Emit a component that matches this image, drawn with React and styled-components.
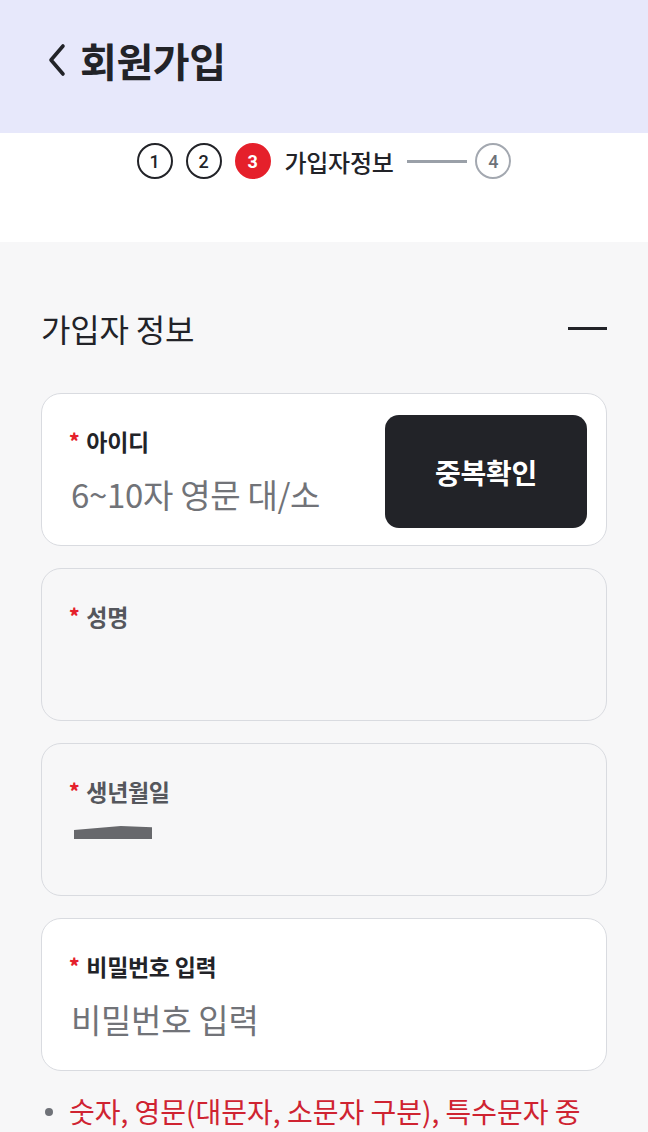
import React from 'react'
import styled, { createGlobalStyle } from 'styled-components'

const GlobalStyle = createGlobalStyle`
    * { box-sizing: border-box; }
    html, body {
        margin: 0;
        padding: 0;
        background: #f7f7f8;
        font-family: "Noto Sans CJK KR", "Noto Sans", Roboto, sans-serif;
        color: #222328;
    }
`;

const Page = styled.div`
    width: 648px;
    height: 1132px;
    overflow: hidden;
    background: #f7f7f8;
`;

const Header = styled.header`
    height: 133px;
    background: #e7e8fb;
    display: flex;
    align-items: center;
    padding: 0 0 14px 46px;
    gap: 12px;
`;

const Title = styled.h1`
    margin: 0;
    font-size: 40px;
    font-weight: 700;
    letter-spacing: -0.4px;
    color: #222328;
`;

const StepBar = styled.div`
    height: 109px;
    background: #fff;
    display: flex;
    justify-content: center;
    align-items: flex-start;
    padding-top: 10px;
`;

const Steps = styled.div`
    display: flex;
    align-items: center;
    height: 36px;
`;

const Circle = styled.span`
    width: 36px;
    height: 36px;
    border-radius: 50%;
    display: flex;
    align-items: center;
    justify-content: center;
    font-family: Roboto, "Noto Sans", sans-serif;
    font-size: 18px;
    font-weight: 500;
    margin-right: ${p => p.$mr || 0}px;
    border: 2.5px solid ${p => p.$state === 'todo' ? '#a3a8b0' : '#222328'};
    color: ${p => p.$state === 'todo' ? '#6d727a' : '#222328'};
    ${p => p.$state === 'active' && `
        background: #e5202b;
        border-color: #e5202b;
        color: #fff;
        font-weight: 700;
    `}
`;

const StepLabel = styled.span`
    font-size: 24px;
    font-weight: 500;
    margin: 0 14px 0 14px;
    color: #222328;
    letter-spacing: -0.3px;
`;

const StepLine = styled.span`
    width: 60px;
    height: 3px;
    background: #9aa0a8;
    margin-right: 8px;
`;

const Section = styled.section`
    padding: 66px 41px 0 41px;
`;

const SectionHead = styled.div`
    display: flex;
    justify-content: space-between;
    align-items: center;
    height: 40px;
    margin-bottom: 45px;
`;

const SectionTitle = styled.h2`
    margin: 0;
    font-size: 32px;
    font-weight: 400;
    color: #222328;
    letter-spacing: -0.2px;
`;

const Collapse = styled.span`
    width: 39px;
    height: 3px;
    background: #222328;
`;

const Card = styled.div`
    height: 153px;
    border: 1px solid #d9dbe0;
    border-radius: 20px;
    background: ${p => p.$disabled ? '#f7f7f8' : '#fff'};
    display: flex;
    align-items: center;
    padding: 0 19px 0 27px;
    margin-bottom: 22px;
`;

const Field = styled.div`
    flex: 1;
    align-self: flex-start;
    padding-top: 33px;
    display: flex;
    flex-direction: column;
    gap: 19px;
`;

const Label = styled.div`
    height: 28px;
    line-height: 28px;
    font-size: 23px;
    font-weight: 700;
    letter-spacing: -0.3px;
    color: ${p => p.$disabled ? '#55575d' : '#222328'};

    & b {
        color: #e5202b;
        font-size: 20px;
        margin-right: 7px;
        vertical-align: 2px;
    }
`;

const Placeholder = styled.div`
    height: 40px;
    line-height: 40px;
    font-size: 33px;
    font-weight: 400;
    color: #717378;
    padding-left: 2px;
    letter-spacing: -0.3px;
`;

const Masked = styled.div`
    height: 40px;
    display: flex;
    align-items: flex-start;
    padding: 2px 0 0 5px;

    & span {
        width: 78px;
        height: 13px;
        background: #67686c;
        clip-path: polygon(0 30%, 30% 15%, 60% 0, 100% 10%, 100% 100%, 0 100%);
    }
`;

const CheckButton = styled.button`
    width: 202px;
    height: 113px;
    margin-top: 4px;
    border: none;
    border-radius: 14px;
    background: #222328;
    color: #fff;
    font-family: inherit;
    font-size: 28px;
    font-weight: 700;
    letter-spacing: -0.3px;
`;

const Notes = styled.ul`
    margin: 6px 0 0 0;
    padding: 0 20px 0 28px;
    list-style: none;
`;

const Note = styled.li`
    position: relative;
    font-size: 28px;
    line-height: 36px;
    color: #cf2331;
    letter-spacing: 0;

    &::before {
        content: '';
        position: absolute;
        left: -24px;
        top: 15px;
        width: 8px;
        height: 8px;
        border-radius: 50%;
        background: #6f7278;
    }
`;

const BackIcon = () => (
    <svg width="22" height="34" viewBox="0 0 22 34">
        <polyline points="17,3 5,17 17,31" fill="none" stroke="#222328" strokeWidth="3.6" strokeLinecap="round" strokeLinejoin="round" />
    </svg>
);

export default function App() {
    return (
        <Page>
            <GlobalStyle />
            <Header>
                <BackIcon />
                <Title>회원가입</Title>
            </Header>
            <StepBar>
                <Steps>
                    <Circle $state="done" $mr={13}>1</Circle>
                    <Circle $state="done" $mr={13}>2</Circle>
                    <Circle $state="active">3</Circle>
                    <StepLabel>가입자정보</StepLabel>
                    <StepLine />
                    <Circle $state="todo">4</Circle>
                </Steps>
            </StepBar>
            <Section>
                <SectionHead>
                    <SectionTitle>가입자 정보</SectionTitle>
                    <Collapse />
                </SectionHead>
                <Card>
                    <Field>
                        <Label><b>*</b>아이디</Label>
                        <Placeholder>6~10자 영문 대/소</Placeholder>
                    </Field>
                    <CheckButton>중복확인</CheckButton>
                </Card>
                <Card $disabled>
                    <Field>
                        <Label $disabled><b>*</b>성명</Label>
                        <Masked />
                    </Field>
                </Card>
                <Card $disabled>
                    <Field>
                        <Label $disabled><b>*</b>생년월일</Label>
                        <Masked><span /></Masked>
                    </Field>
                </Card>
                <Card>
                    <Field>
                        <Label><b>*</b>비밀번호 입력</Label>
                        <Placeholder>비밀번호 입력</Placeholder>
                    </Field>
                </Card>
                <Notes>
                    <Note>숫자, 영문(대문자, 소문자 구분), 특수문자 중 2가지 이상 조합하여 8~16자</Note>
                </Notes>
            </Section>
        </Page>
    );
}
